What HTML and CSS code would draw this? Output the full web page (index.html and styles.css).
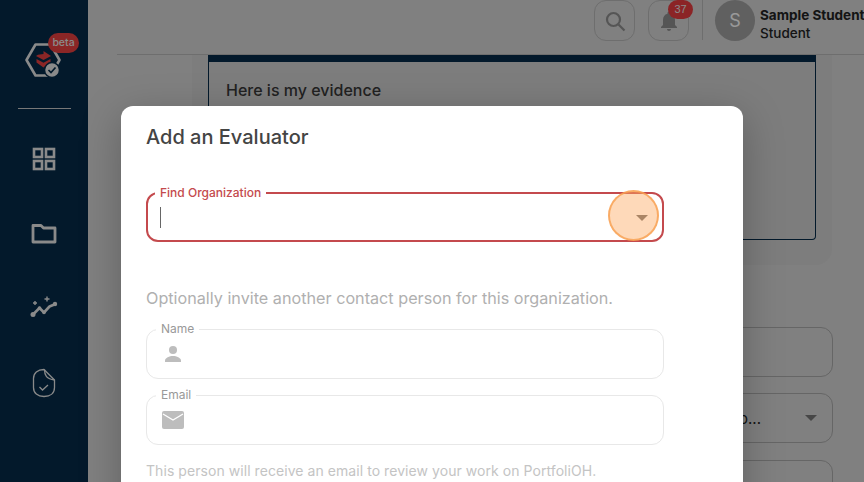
FILE: index.html
```html
<!DOCTYPE html>
<html lang="en">
<head>
    <meta charset="UTF-8">
    <meta name="viewport" content="width=device-width, initial-scale=1.0">
    <title>Add an Evaluator</title>
    <link rel="stylesheet" href="styles.css">
</head>
<body>
    <div class="app">
        <nav class="sidebar">
            <div class="logo">
                <svg width="44" height="44" viewBox="0 0 44 44">
                    <path d="M13.500 6.500h15L37.500 22l-9 15.500h-15L4.500 22z" fill="none" stroke="#e6e6e6" stroke-width="2.600" stroke-linejoin="round"/>
                    <path d="M21.500 13l7.500 5-7.500 4-7.500-4 2-1.300 5.500-.7z" fill="#e84040"/>
                    <path d="M14.500 21l7 3.800 7-3.800v3.500l-7 5-7-5z" fill="#e84040"/>
                    <circle cx="30" cy="32" r="7.500" fill="#e6e6e6" stroke="#052b49" stroke-width="1.500"/>
                    <path d="M26.500 32l2.500 2.500 4.500-5" fill="none" stroke="#052b49" stroke-width="1.700"/>
                </svg>
                <span class="beta">beta</span>
            </div>
            <div class="side-line"></div>
            <svg class="side-icon" width="24" height="24" viewBox="0 0 24 24" fill="none" stroke="#e6e6e6" stroke-width="2.600">
                <rect x="2" y="2" width="8" height="8"/>
                <rect x="14" y="2" width="8" height="8"/>
                <rect x="2" y="14" width="8" height="8"/>
                <rect x="14" y="14" width="8" height="8"/>
            </svg>
            <svg class="side-icon" width="26" height="24" viewBox="0 0 26 24" fill="none" stroke="#e6e6e6" stroke-width="2.800">
                <path d="M2 4.500h8l2.500 2.500H24v14H2z" stroke-linejoin="round"/>
            </svg>
            <svg class="side-icon" width="28" height="24" viewBox="0 0 28 24" fill="none" stroke="#e6e6e6">
                <path d="M3 19.500l6.500-6.500 4.500 4.500 5.500-6 6-2.500" stroke-width="2.600" stroke-linejoin="round"/>
                <circle cx="3" cy="19.500" r="2.500" fill="#e6e6e6" stroke="none"/>
                <circle cx="9.500" cy="13" r="1.800" fill="#e6e6e6" stroke="none"/>
                <circle cx="14" cy="17.500" r="1.800" fill="#e6e6e6" stroke="none"/>
                <circle cx="25" cy="9" r="2.200" fill="#e6e6e6" stroke="none"/>
                <path d="M5 6v4M3 8h4M17 1.500v5M14.500 4h5" stroke-width="1.400"/>
            </svg>
            <svg class="side-icon side-doc" width="24" height="30" viewBox="0 0 24 30" fill="none" stroke="#e6e6e6" stroke-width="1.300">
                <path d="M12 1.500C5.500 1.500 1.500 5 1.500 10.500v9c0 5.500 4 9 10.500 9s10.500-3.500 10.500-9v-7.500z" stroke-linejoin="round"/>
                <path d="M12.500 1.500c0 6 2 9.500 10 10.500"/>
                <path d="M7.500 19l3 3 5.500-5"/>
            </svg>
        </nav>

        <main class="main">
            <header class="topbar">
                <button class="icon-btn">
                    <svg width="24" height="24" viewBox="0 0 24 24" fill="none" stroke="#8e8e8e" stroke-width="2.200">
                        <circle cx="10.500" cy="10.500" r="6.500"/>
                        <path d="M15.500 15.500l6 6"/>
                    </svg>
                </button>
                <button class="icon-btn bell-btn">
                    <svg width="24" height="24" viewBox="0 0 24 24" fill="#8e8e8e">
                        <path d="M12 22c1.100 0 2-.9 2-2h-4c0 1.100.9 2 2 2zm6-6v-5c0-3.100-1.600-5.600-4.500-6.300V4c0-.8-.7-1.500-1.500-1.500s-1.500.7-1.500 1.500v.7C7.600 5.400 6 7.900 6 11v5l-2 2v1h16v-1z"/>
                    </svg>
                    <span class="badge">37</span>
                </button>
                <div class="top-divider"></div>
                <div class="avatar">S</div>
                <div class="user">
                    <div class="user-name">Sample Student</div>
                    <div class="user-role">Student</div>
                </div>
            </header>

            <section class="content">
                <div class="panel">
                    <div class="evidence">
                        <p>Here is my evidence</p>
                    </div>
                </div>
                <div class="back-field"></div>
                <div class="back-field back-select">
                    <span>Select a Portfolio...</span>
                    <i class="arrow back-arrow"></i>
                </div>
                <div class="back-field"></div>
            </section>
        </main>

        <div class="backdrop"></div>

        <div class="modal">
            <h2>Add an Evaluator</h2>

            <div class="field field-active">
                <span class="field-label">Find Organization</span>
                <span class="caret"></span>
                <i class="arrow"></i>
                <span class="click-spot"></span>
            </div>

            <p class="hint">Optionally invite another contact person for this organization.</p>

            <div class="field field-muted">
                <span class="field-label">Name</span>
                <svg width="24" height="24" viewBox="0 0 24 24" fill="#bdbdbd">
                    <circle cx="12" cy="8" r="4"/>
                    <path d="M12 14c-3.500 0-8 1.800-8 4.500V20h16v-1.500c0-2.700-4.500-4.500-8-4.500z"/>
                </svg>
            </div>

            <div class="field field-muted">
                <span class="field-label">Email</span>
                <svg width="24" height="20" viewBox="0 0 24 20">
                    <rect x="1" y="1" width="22" height="18" rx="2" fill="#bdbdbd"/>
                    <path d="M2 4l10 6 10-6" fill="none" stroke="#fff" stroke-width="1.300"/>
                </svg>
            </div>

            <p class="note">This person will receive an email to review your work on PortfoliOH.</p>
        </div>
    </div>
</body>
</html>
```

FILE: styles.css
```css
html, body {
    margin: 0;
    padding: 0;
    height: 100%;
    overflow: hidden;
}

body {
    font-family: Inter, "Liberation Sans", sans-serif;
    background-color: #d5d5d5;
    color: #383838;
}

.app {
    position: relative;
    display: flex;
    height: 482px;
    overflow: hidden;
}

/* Sidebar */
.sidebar {
    width: 88px;
    flex: none;
    background-color: #052b49;
    display: flex;
    flex-direction: column;
    align-items: center;
}

.logo {
    position: relative;
    width: 44px;
    height: 44px;
    margin-top: 38px;
}

.beta {
    position: absolute;
    left: 26px;
    top: -5px;
    width: 31px;
    height: 20px;
    border-radius: 10px;
    background-color: #e84040;
    color: #e6e6e6;
    font-size: 10.500px;
    font-weight: 500;
    line-height: 20px;
    text-align: center;
}

.side-line {
    width: 53px;
    height: 1px;
    background-color: #c8c8c8;
    margin: 26px 0 38px;
}

.side-icon {
    display: block;
    margin-bottom: 50px;
}

.side-doc {
    margin-top: -1px;
}

/* Page behind the dialog */
.main {
    flex: 1;
    min-width: 0;
}

.topbar {
    height: 55px;
    box-sizing: border-box;
    margin-left: 29px;
    padding-left: 477px;
    border-bottom: 1px solid #b8b8b8;
    display: flex;
    align-items: flex-start;
}

.icon-btn {
    position: relative;
    width: 41px;
    height: 41px;
    flex: none;
    padding: 0;
    margin-right: 13px;
    background: none;
    border: 1px solid #b8b8b8;
    border-radius: 12px;
    display: flex;
    align-items: center;
    justify-content: center;
}

.badge {
    position: absolute;
    left: 19px;
    top: -1px;
    width: 25px;
    height: 19px;
    border-radius: 10px;
    background-color: #e83c40;
    color: #e6e6e6;
    font-size: 11px;
    font-weight: 500;
    line-height: 18px;
    text-align: center;
}

.top-divider {
    width: 1px;
    height: 40px;
    flex: none;
    background-color: #b8b8b8;
    margin-right: 12px;
}

.avatar {
    width: 40px;
    height: 41px;
    flex: none;
    border-radius: 50%;
    background-color: #a0a0a0;
    color: #fff;
    font-size: 18px;
    line-height: 41px;
    text-align: center;
    margin-right: 5px;
}

.user {
    flex: none;
    white-space: nowrap;
    font-size: 13.500px;
    color: #222;
    padding-top: 6px;
}

.user-name {
    font-weight: 700;
    line-height: 18px;
}

.user-role {
    font-weight: 500;
    line-height: 18px;
}

.content {
    padding: 0 32px 0 104px;
}

.panel {
    height: 210px;
    padding: 0 16px;
    background-color: #d1d1d1;
    border-radius: 0 0 16px 16px;
}

.evidence {
    box-sizing: border-box;
    height: 185px;
    border: 1px solid #052b49;
    border-top: 7px solid #052b49;
    border-radius: 0 0 4px 4px;
    padding: 0 17px;
}

.evidence p {
    margin: 18px 0 0;
    font-size: 16px;
    line-height: 20px;
    font-weight: 500;
}

.back-field {
    box-sizing: border-box;
    height: 50px;
    margin: 0 -1px 16px 0;
    border: 1px solid #aaa;
    border-radius: 12px;
    display: flex;
    align-items: center;
    justify-content: flex-end;
}

.panel + .back-field {
    margin-top: 62px;
}

.back-select {
    margin-bottom: 17px;
    font-size: 15px;
    color: #222;
}

.arrow {
    width: 0;
    height: 0;
    border-left: 6px solid transparent;
    border-right: 6px solid transparent;
    border-top: 6px solid #777;
}

.back-arrow {
    margin: 0 15px 0 44px;
}

/* Dialog */
.backdrop {
    position: absolute;
    inset: 0;
    background-color: rgba(0, 0, 0, 0.4);
}

.modal {
    position: absolute;
    left: 121px;
    top: 106px;
    width: 622px;
    height: 460px;
    box-sizing: border-box;
    padding: 0 79px 0 25px;
    background-color: #fff;
    border-radius: 12px;
    box-shadow: 0 10px 40px rgba(0, 0, 0, 0.25);
}

.modal h2 {
    margin: 19px 0 43px;
    font-size: 20px;
    line-height: 24px;
    font-weight: 500;
    color: #444;
}

.field {
    position: relative;
    box-sizing: border-box;
    height: 50px;
    border-radius: 12px;
    display: flex;
    align-items: center;
    padding-left: 14px;
}

.field-label {
    position: absolute;
    left: 9px;
    top: -8px;
    padding: 0 5px;
    background-color: #fff;
    font-size: 12px;
    line-height: 14px;
}

.field-active {
    border: 2px solid #c44a4d;
    padding-left: 12px;
}

.field-active .field-label {
    left: 7px;
    color: #c44a4d;
    font-weight: 500;
}

.caret {
    width: 1px;
    height: 21px;
    background-color: #666;
}

.field-active .arrow {
    position: absolute;
    right: 14px;
    top: 21px;
    border-top-color: #666;
}

/* Orange marker left by the screen recorder */
.click-spot {
    position: absolute;
    right: 3px;
    top: -4px;
    width: 51px;
    height: 51px;
    box-sizing: border-box;
    border-radius: 50%;
    border: 2px solid rgba(248, 160, 80, 0.8);
    background-color: rgba(253, 170, 100, 0.45);
}

.hint {
    margin: 46px 0 21px;
    font-size: 16.200px;
    line-height: 20px;
    color: #b0b0b0;
}

.field-muted {
    border: 1px solid #e8e8e8;
    margin-bottom: 16px;
}

.field-muted .field-label {
    color: #999;
}

.note {
    margin: 17px 0 0;
    font-size: 14px;
    letter-spacing: 0.06px;
    line-height: 18px;
    color: #c4c4c4;
}
```
